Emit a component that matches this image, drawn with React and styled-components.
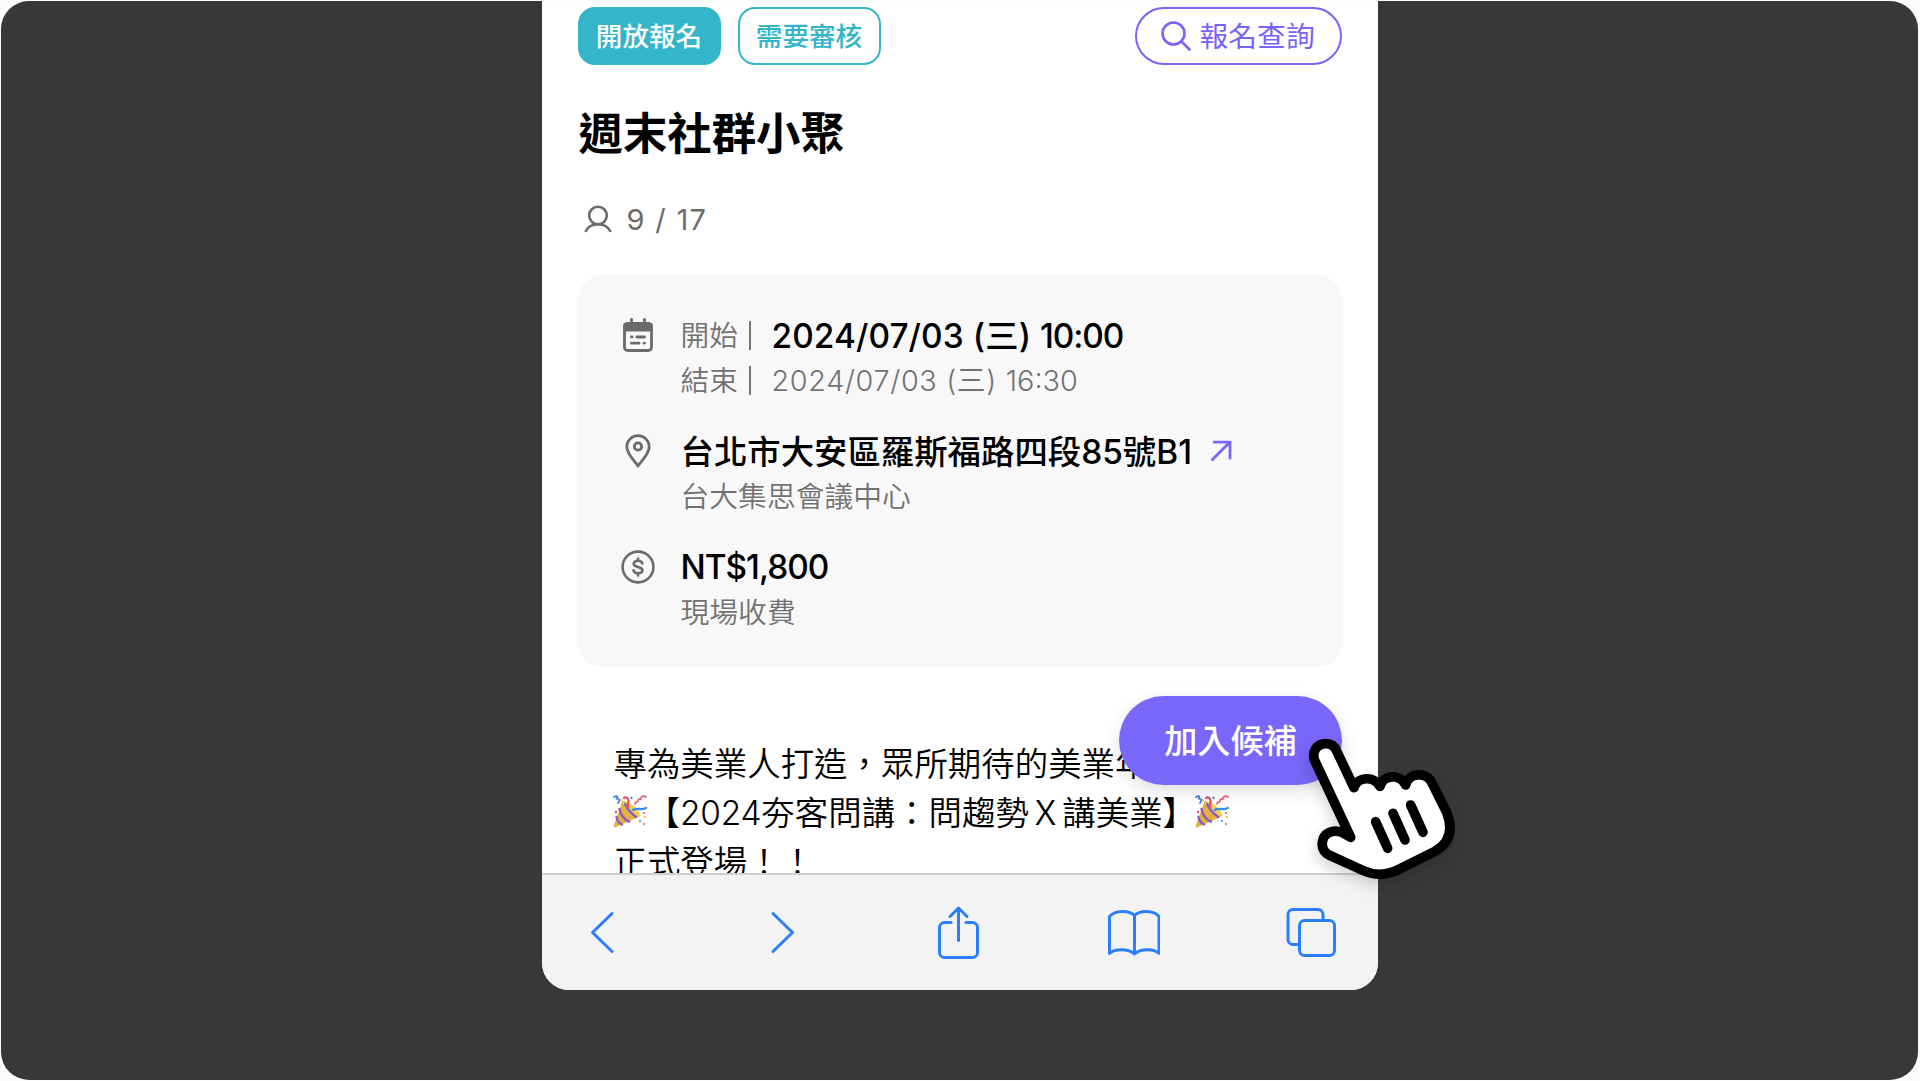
import React from 'react';
import styled, { createGlobalStyle } from 'styled-components';

const GlobalStyle = createGlobalStyle`
  * {
    box-sizing: border-box;
  }

  body {
    margin: 0;
    background: #fcfcfc;
    font-family: "Inter", "Noto Sans CJK TC", sans-serif;
    color: #000;
    overflow: hidden;
  }
`;

const Stage = styled.div`
  position: relative;
  display: flex;
  justify-content: center;
  align-items: flex-start;
  height: 1079px;
  margin: 1px 2px 1px 1px;
  border-radius: 28px;
  background-color: #383838;
`;

const Phone = styled.div`
  position: relative;
  display: flex;
  flex-direction: column;
  width: 836px;
  height: 989px;
  border-radius: 0 0 27px 27px;
  background-color: #fff;
  overflow: hidden;
`;

const Content = styled.div`
  flex: 1;
  min-height: 0;
  overflow: hidden;
  padding: 6px 36px 0;
`;

const TopRow = styled.div`
  display: flex;
  align-items: center;
  gap: 17px;
  height: 58px;
`;

const Tag = styled.span`
  display: flex;
  justify-content: center;
  align-items: center;
  width: 143px;
  height: 58px;
  border: 2px solid #34b5c9;
  border-radius: 17px;
  background-color: ${(props) => (props.$filled ? '#34b5c9' : '#fff')};
  color: ${(props) => (props.$filled ? '#fff' : '#34b5c9')};
  font-size: 26.6px;
  font-weight: 500;
  line-height: 1;
`;

const QueryButton = styled.button`
  display: flex;
  align-items: center;
  gap: 9px;
  width: 207px;
  height: 58px;
  margin-left: auto;
  padding: 2px 0 0 24px;
  border: 2px solid #7863fb;
  border-radius: 29px;
  background: none;
  color: #7863fb;
  font-family: inherit;
  font-size: 28.8px;
  font-weight: 400;
  line-height: 1;

  svg {
    margin-top: -2px;
  }
`;

const Title = styled.h1`
  margin: 43px 0 0 1px;
  font-size: 44.4px;
  font-weight: 700;
  line-height: 52px;
`;

const Attendance = styled.div`
  display: flex;
  align-items: center;
  gap: 15px;
  height: 36px;
  margin-top: 41px;
  padding-left: 6px;
  color: #6b6b6b;
  font-size: 29px;
  letter-spacing: 1.3px;
`;

const Card = styled.section`
  display: flex;
  flex-direction: column;
  gap: 27px;
  height: 392px;
  margin-top: 38px;
  padding: 37px 42px 0;
  border-radius: 25px;
  background-color: #f8f8f8;
`;

const InfoRow = styled.div`
  display: flex;
  gap: 25px;
`;

const IconCell = styled.div`
  display: flex;
  justify-content: center;
  align-items: center;
  width: 36px;
  height: 46px;
`;

const Lines = styled.div`
  display: flex;
  flex-direction: column;
`;

const Line = styled.div`
  display: flex;
  align-items: center;
  height: ${(props) => (props.$strong ? '46px' : '43px')};
  padding-bottom: ${(props) => props.$lift ?? 2}px;
  color: ${(props) => (props.$strong ? '#000' : '#727272')};
  font-size: ${(props) => (props.$strong ? '33.4px' : '28.8px')};
  font-weight: ${(props) => (props.$strong ? 500 : 350)};
  letter-spacing: ${(props) => props.$spacing || '0'};
  white-space: pre;

  svg {
    margin: 4px 0 0 18px;
  }
`;

const Label = styled.span`
  width: 91px;
  color: #727272;
  font-size: 28.7px;
  font-weight: 350;
  letter-spacing: 0;
`;

const Time = styled.span`
  letter-spacing: ${(props) => props.$spacing};
`;

const Divider = styled.i`
  display: inline-block;
  width: 2px;
  height: 29px;
  margin-left: 11px;
  vertical-align: -4px;
  background-color: #757575;
`;

const Description = styled.div`
  margin-top: 73px;
  padding-left: 36px;
  font-size: 33.45px;
  font-weight: 350;
  line-height: 49px;
  white-space: nowrap;

  svg {
    margin-left: -1px;
    vertical-align: -4px;
  }
`;

const Year = styled.span`
  letter-spacing: -0.2px;
`;

const Toolbar = styled.nav`
  display: flex;
  justify-content: space-between;
  height: 117px;
  padding: 30px 40px 0 33px;
  border-top: 2px solid #cfcfcf;
  background-color: #f3f3f3;
`;

const JoinButton = styled.button`
  position: absolute;
  right: 36px;
  top: 695px;
  width: 223px;
  height: 89px;
  padding: 0 0 4px 1px;
  border: none;
  border-radius: 45px;
  background-color: #7b66fa;
  box-shadow: 0 6px 18px rgba(0, 0, 0, 0.13);
  color: #fff;
  font-family: inherit;
  font-size: 33.2px;
  font-weight: 500;
`;

const Pointer = styled.svg`
  position: absolute;
  left: 1299px;
  top: 732px;
  filter: drop-shadow(-2px 6px 7px rgba(0, 0, 0, 0.16));
`;

const SearchIcon = () => (
  <svg width="30" height="32" viewBox="0 0 30 32" fill="none" stroke="currentColor" strokeWidth="2.6" strokeLinecap="round">
    <circle cx="12.5" cy="13.5" r="11" />
    <path d="M20.5 21.5 28.5 29.5" />
  </svg>
);

const UserIcon = () => (
  <svg width="28" height="28" viewBox="0 0 28 28" fill="none" stroke="currentColor" strokeWidth="2.6" strokeLinecap="round">
    <circle cx="14" cy="10.5" r="8.8" />
    <path d="M1.8 26C4 21.5 8.5 19.2 14 19.2S24 21.5 26.2 26" />
  </svg>
);

const CalendarIcon = () => (
  <svg width="30" height="34" viewBox="0 0 30 34" fill="none" stroke="#6b6b6b" strokeWidth="2.8" strokeLinecap="round">
    <rect x="1.5" y="5.5" width="27" height="27" rx="3" />
    <path d="M1.5 6h27v6.5h-27z" fill="#6b6b6b" strokeWidth="2" strokeLinejoin="round" />
    <path d="M8.5 1.5v5M21.5 1.5v5" />
    <path d="M8.5 19h.5M14 19h7.5M8.5 25.2h7.5M21 25.2h.5" />
  </svg>
);

const PinIcon = () => (
  <svg width="26" height="34" viewBox="0 0 26 34" fill="none" stroke="#6b6b6b" strokeWidth="2.8" strokeLinejoin="round">
    <path d="M13 32C10 27 1.8 20.5 1.8 12.8a11.2 11.2 0 0 1 22.4 0C24.2 20.5 16 27 13 32z" />
    <circle cx="13" cy="12.5" r="3.7" />
  </svg>
);

const CoinIcon = () => (
  <svg width="34" height="34" viewBox="0 0 34 34" fill="none" stroke="#6b6b6b" strokeWidth="2.6" strokeLinecap="round">
    <circle cx="17" cy="17" r="15.4" />
    <path d="M21.3 13.5c-.5-1.7-2.2-2.7-4.3-2.7-2.5 0-4.3 1.2-4.3 3 0 4.3 8.7 2 8.7 6.4 0 1.9-1.9 3-4.4 3-2.3 0-4.1-1.1-4.5-2.9M17 8.5v2.3M17 23.2v2.3" />
  </svg>
);

const ArrowIcon = () => (
  <svg width="22" height="22" viewBox="0 0 22 22" fill="none" stroke="#7b66fa" strokeWidth="2.8">
    <path d="M1.5 20.5 19.5 2.5M3 2.2h17v17" />
  </svg>
);

const PartyIcon = () => (
  <svg width="34" height="34" viewBox="0 0 34 34" fill="none" strokeLinecap="round">
    <path d="M9.5 6C16 6.5 25 14 27.5 21L2 32.5Q0 33 .8 30.5z" fill="#e5b23c" />
    <path d="M9.5 6C18 7 25 13 27.5 21c-5 2-16-5-18-15z" fill="#f6cf4c" />
    <path d="M6.5 14c1 6 5 11 9.5 12.5M3.5 22c.8 4 3 6.5 5.5 7.5M12 9c2 5 6 9 11 13" stroke="#8a5cc9" strokeWidth="2.4" />
    <path d="M15 12c-1-4 2-5 0-8-1-2-3-2-4-1" stroke="#ee4b6a" strokeWidth="2.2" />
    <path d="M20 15c4-3 6 1 13-2" stroke="#3b8df0" strokeWidth="2.4" />
    <path d="M1 2c3-2 5 0 2 2 4-1 4 1 2 4" stroke="#3b7fe8" strokeWidth="1.7" />
    <path d="M22 9c0-3 3-1 3-3s2-3 3-1c-1-3 2-5 5-3" stroke="#f05a78" strokeWidth="1.7" />
    <circle cx="8" cy="5" r="1.2" fill="#f6c945" />
    <circle cx="18.5" cy="3" r="1.2" fill="#3b8df0" />
    <circle cx="3" cy="17" r="1.2" fill="#ee4b6a" />
    <circle cx="31" cy="18" r="1" fill="#ee4b6a" />
    <circle cx="32" cy="22" r="1.2" fill="#f6c945" />
    <circle cx="27" cy="26" r="1.1" fill="#3b8df0" />
    <circle cx="31" cy="29" r="1.2" fill="#f08a9c" />
  </svg>
);

const BarIcon = ({ children }) => (
  <svg
    width="54"
    height="54"
    viewBox="0 0 54 54"
    fill="none"
    stroke="#2b7fff"
    strokeWidth="3"
    strokeLinecap="round"
    strokeLinejoin="round"
  >
    {children}
  </svg>
);

function App() {
  return (
    <>
      <GlobalStyle />
      <Stage>
        <Phone>
          <Content>
            <TopRow>
              <Tag $filled>開放報名</Tag>
              <Tag>需要審核</Tag>
              <QueryButton>
                <SearchIcon />
                報名查詢
              </QueryButton>
            </TopRow>

            <Title>週末社群小聚</Title>

            <Attendance>
              <UserIcon />
              9 / 17
            </Attendance>

            <Card>
              <InfoRow>
                <IconCell><CalendarIcon /></IconCell>
                <Lines>
                  <Line $strong $lift={4} $spacing="0.1px">
                    <Label>開始<Divider /></Label>
                    <span>2024/07/03 (三) <Time $spacing="-1.1px">10:00</Time></span>
                  </Line>
                  <Line $lift={3} $spacing="0.65px">
                    <Label>結束<Divider /></Label>
                    <span>2024/07/03 (三) <Time $spacing="0">16:30</Time></span>
                  </Line>
                </Lines>
              </InfoRow>

              <InfoRow>
                <IconCell><PinIcon /></IconCell>
                <Lines>
                  <Line $strong $lift={4}>
                    台北市大安區羅斯福路四段85號B1
                    <ArrowIcon />
                  </Line>
                  <Line>台大集思會議中心</Line>
                </Lines>
              </InfoRow>

              <InfoRow>
                <IconCell><CoinIcon /></IconCell>
                <Lines>
                  <Line $strong $lift={0} $spacing="-1px">NT$1,800</Line>
                  <Line>現場收費</Line>
                </Lines>
              </InfoRow>
            </Card>

            <Description>
              <div>專為美業人打造，眾所期待的美業年</div>
              <div>
                <PartyIcon />【<Year>2024</Year>夯客問講：問趨勢Ｘ講美業】<PartyIcon />
              </div>
              <div>正式登場！！</div>
            </Description>
          </Content>

          <Toolbar>
            <BarIcon>
              <path d="M37 8.5 17.5 27.5 37 46.5" />
            </BarIcon>
            <BarIcon>
              <path d="M21 8.5 40.5 27.5 21 46.5" />
            </BarIcon>
            <BarIcon>
              <path d="M22 17.5h-6.5a5 5 0 0 0-5 5V47.500a5 5 0 0 0 5 5h28a5 5 0 0 0 5-5V22.500a5 5 0 0 0-5-5H37" />
              <path d="M29.5 35.5V3M21 11.500 29.500 3l8.500 8.500" />
            </BarIcon>
            <BarIcon>
              <path d="M28.500 10.500C23.500 5 9 5 3.500 11.500v37C9 43.500 22.500 43.500 28.500 49c6-5.500 19-5.500 24.500-.5v-37C47.500 5 33.500 5 28.500 10.500zV49" />
            </BarIcon>
            <BarIcon>
              <rect x="15.500" y="15.500" width="35" height="35" rx="5" />
              <path d="M39 15.500V9.500a5 5 0 0 0-5-5H9a5 5 0 0 0-5 5v25a5 5 0 0 0 5 5h6.500" />
            </BarIcon>
          </Toolbar>

          <JoinButton>加入候補</JoinButton>
        </Phone>

        <Pointer width="170" height="160" viewBox="630 190 510 480" strokeLinecap="round" strokeLinejoin="round">
          <path
            d="M674 272C664 245 682 222 707 222C722 222 734 230 740 244L792 354C803 320 850 318 870 350C880 314 930 312 947 346C955 308 1010 306 1025 338L1070 428C1090 480 1080 520 1035 545L925 600Q873 626 820 603L717 556C702 548 695 535 697 518C700 490 728 478 755 488L782 503Z"
            fill="#fff"
            stroke="#000"
            strokeWidth="29"
          />
          <path d="M857 456 893 536M909 431 945 511M962 406 999 488" fill="none" stroke="#000" strokeWidth="29" />
        </Pointer>
      </Stage>
    </>
  );
}

export default App;
